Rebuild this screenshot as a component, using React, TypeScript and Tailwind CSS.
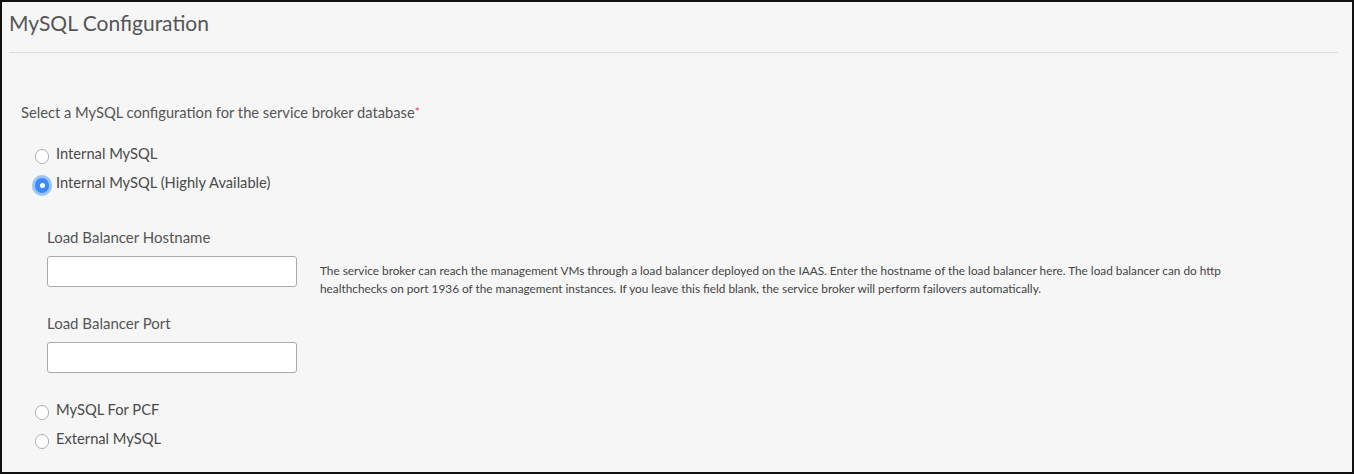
import { useState } from 'react'

const OPTIONS = [
  { id: 'internal', label: 'Internal MySQL' },
  { id: 'internal-ha', label: 'Internal MySQL (Highly Available)' },
  { id: 'pcf', label: 'MySQL For PCF' },
  { id: 'external', label: 'External MySQL' },
]

function Radio({ checked, label, onClick }: { checked: boolean; label: string; onClick: () => void }) {
  return (
    <button onClick={onClick} className="flex items-center h-[29px] text-left">
      <span className="w-[14px] flex justify-center mt-[5px]">
        {checked ? (
          <span className="w-[15px] h-[15px] rounded-full bg-[#3b8bf5] ring-[3px] ring-[#9cc4fb] flex items-center justify-center">
            <span className="w-[5px] h-[5px] rounded-full bg-white" />
          </span>
        ) : (
          <span className="w-[15px] h-[15px] rounded-full border border-[#b0b0b0] bg-white" />
        )}
      </span>
      <span className="ml-[7px] text-[14.7px] text-[#4a4a4a]">{label}</span>
    </button>
  )
}

export default function App() {
  const [sel, setSel] = useState('internal-ha')

  return (
    <div className="w-[1354px] h-[474px] border-2 border-[#111] bg-[#f6f6f6] font-['Lato',sans-serif] overflow-hidden">
      {/* Header */}
      <div className="ml-[7px] mr-[14px] h-[51px] border-b border-[#dcdcdc] flex items-center">
        <h1 className="text-[21px] text-[#555] leading-none -mt-[9px]">MySQL Configuration</h1>
      </div>

      <div className="pl-[19px] pt-[49px]">
        <p className="text-[14.7px] text-[#555] leading-[20px]">
          Select a MySQL configuration for the service broker database<span className="text-[#e0485a] text-[12px] align-top">*</span>
        </p>

        <div className="pl-[14px] mt-[17px] flex flex-col">
          {OPTIONS.slice(0, 2).map(o => (
            <Radio key={o.id} checked={sel === o.id} label={o.label} onClick={() => setSel(o.id)} />
          ))}

          {sel === 'internal-ha' && (
            <div className="pl-[12px] pt-[30px] pb-[22px] flex flex-col">
              <div className="flex items-start">
                <div className="w-[250px]">
                  <p className="text-[15px] text-[#555] leading-[20px]">Load Balancer Hostname</p>
                  <input className="mt-[9px] w-[250px] h-[31px] bg-white border border-[#ababab] rounded-[3px]" />
                </div>
                <p className="ml-[23px] mt-[35px] text-[11.8px] leading-[18px] text-[#444] max-w-[930px]">
                  The service broker can reach the management VMs through a load balancer deployed on the IAAS. Enter the hostname of the load balancer here. The load balancer can do http healthchecks on port 1936 of the management instances. If you leave this field blank, the service broker will perform failovers automatically.
                </p>
              </div>
              <div className="w-[250px] mt-[15px]">
                <p className="text-[15px] text-[#555] leading-[20px]">Load Balancer Port</p>
                <input className="mt-[9px] w-[250px] h-[31px] bg-white border border-[#ababab] rounded-[3px]" />
              </div>
            </div>
          )}

          {OPTIONS.slice(2).map(o => (
            <Radio key={o.id} checked={sel === o.id} label={o.label} onClick={() => setSel(o.id)} />
          ))}
        </div>
      </div>
    </div>
  )
}
